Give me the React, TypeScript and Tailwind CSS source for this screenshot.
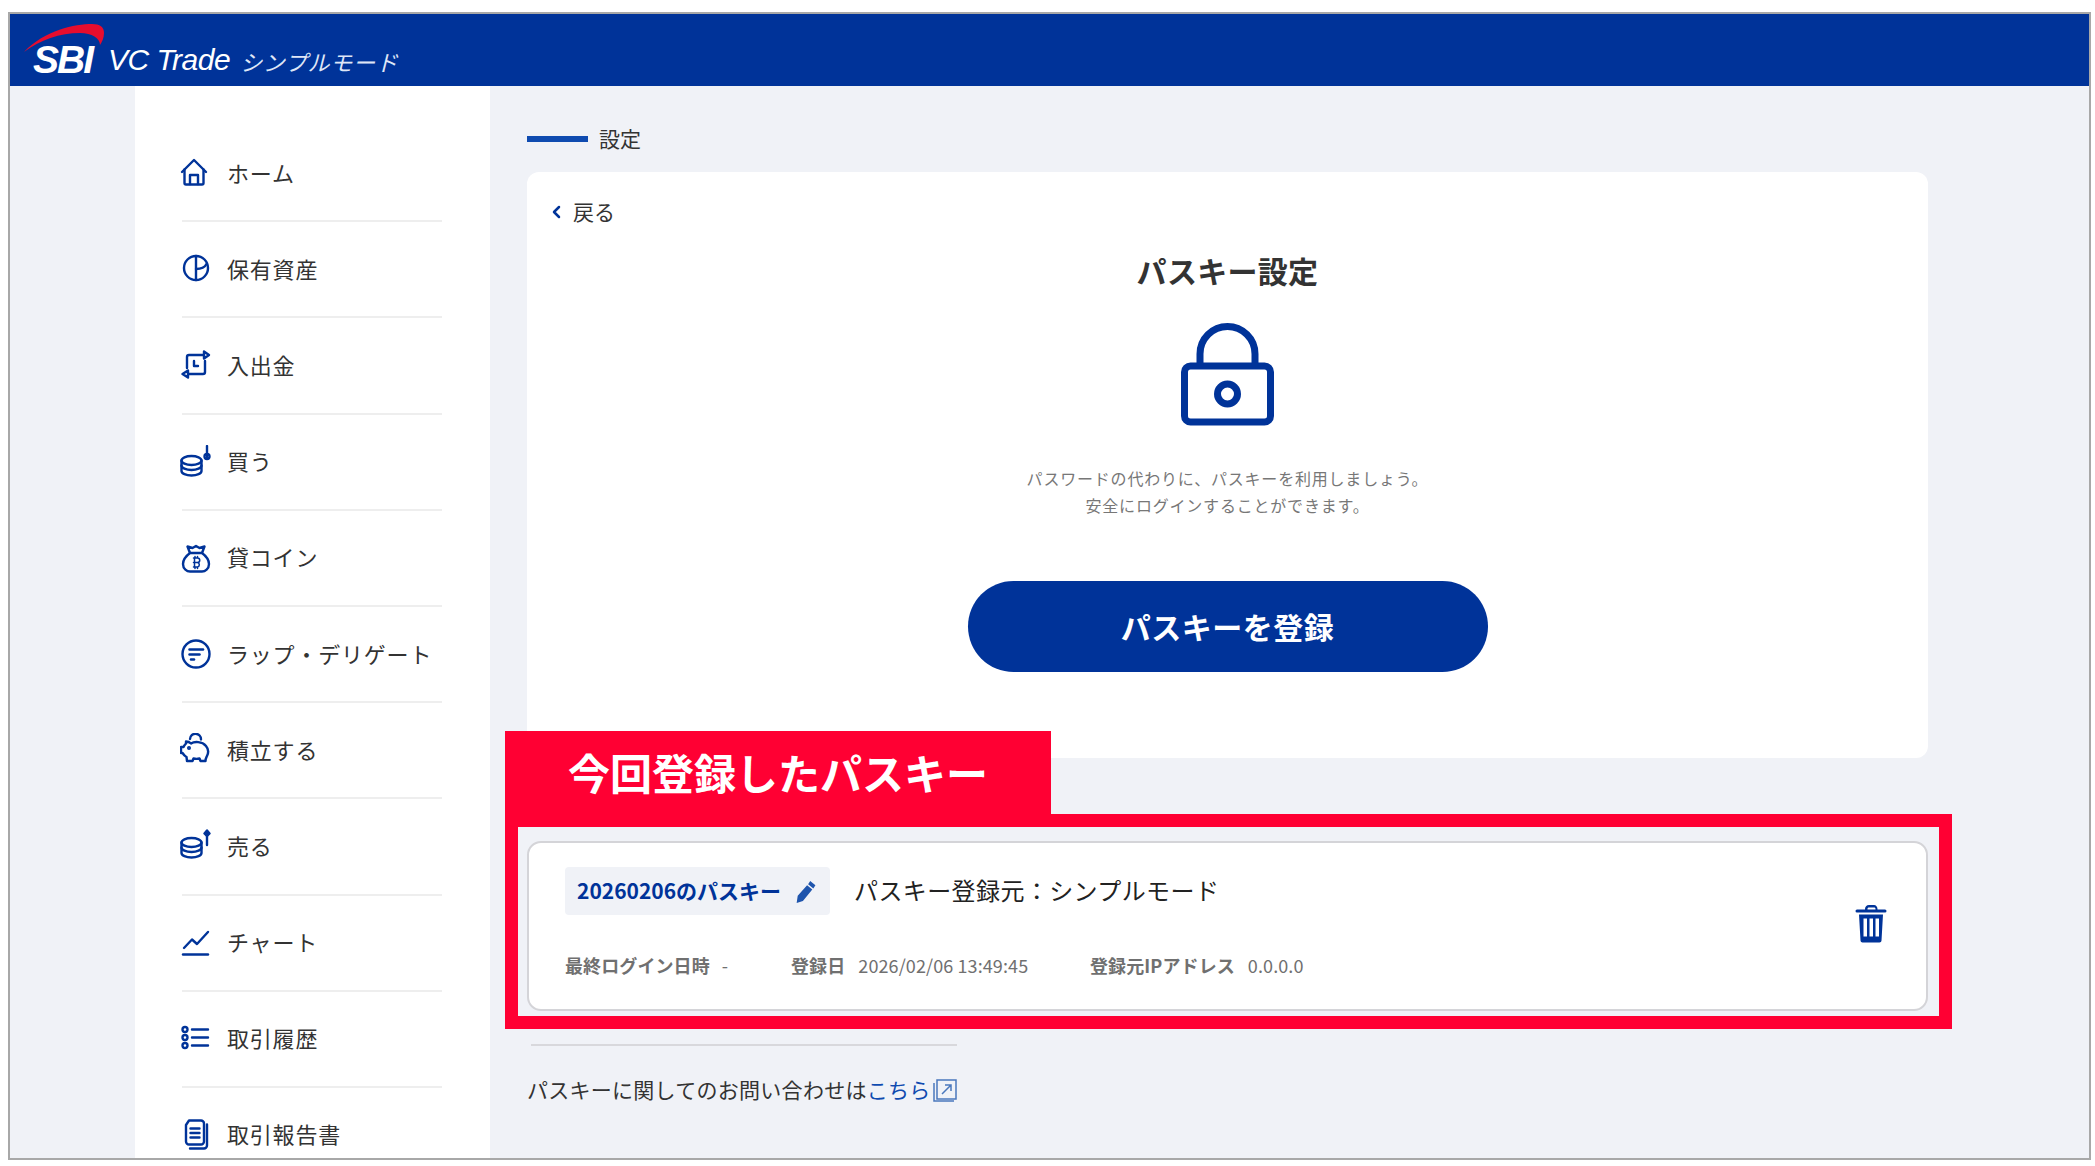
import type { ReactNode } from "react";

const jp = "font-['Noto_Sans_CJK_JP','Noto_Sans',sans-serif]";

function Icon({ children }: { children: ReactNode }) {
    return (
        <svg
            viewBox="0 0 32 32"
            fill="none"
            stroke="#003399"
            strokeWidth="2.4"
            strokeLinecap="round"
            strokeLinejoin="round"
            className="w-8 h-8 shrink-0 -ml-[2px]"
        >
            {children}
        </svg>
    );
}

function Coins({ up }: { up: boolean }) {
    return (
        <Icon>
            <g transform={up ? "translate(0 -2)" : undefined}>
                <ellipse cx="11.500" cy="15.500" rx="10" ry="4.500" />
                <path d="M1.500 15.500v10.500c0 2.500 4.500 4.500 10 4.500s10-2 10-4.500V15.500" />
                <path d="M1.500 20.500c0 2.500 4.500 4.500 10 4.500s10-2 10-4.500" />
            </g>
            {up ? (
                <>
                    <path d="M27 5v11" />
                    <path d="M27 1.500 29.500 4.500 27 7 24.500 4.500z" fill="#003399" />
                </>
            ) : (
                <>
                    <path d="M27 1v11" />
                    <circle cx="27" cy="11.500" r="2.500" />
                </>
            )}
        </Icon>
    );
}

const navItems: { label: string; icon: ReactNode }[] = [
    {
        label: "ホーム",
        icon: (
            <Icon>
                <path d="M2 16 14 4l12 12" />
                <path d="M4.500 13.500V27a1.500 1.500 0 0 0 1.500 1.500h16a1.500 1.500 0 0 0 1.500-1.500V13.500" />
                <path d="M10 28v-9h8v9" />
            </Icon>
        ),
    },
    {
        label: "保有資産",
        icon: (
            <Icon>
                <circle cx="16" cy="16" r="12" />
                <path d="M16 4v24" />
                <path d="M16 17c5 0 9-2 10.500-5" />
            </Icon>
        ),
    },
    {
        label: "入出金",
        icon: (
            <Icon>
                <path d="M7 20V9a2 2 0 0 1 2-2h14" />
                <path d="M24 3.500 29 7l-5 3.500z" />
                <path d="M25 13v11a2 2 0 0 1-2 2H9" />
                <path d="M8 22.500 2.500 26 8 29.500z" />
                <path d="M14 13v5h4" />
            </Icon>
        ),
    },
    { label: "買う", icon: <Coins up={false} /> },
    {
        label: "貸コイン",
        icon: (
            <Icon>
                <path d="M10 12 7.500 5.500 12.500 7l3.500-2 3.500 2 5-1.500L22 12" />
                <path d="M10 12h12c4 3 7 7 7 11 0 5-4 7.500-7 7.500H10c-3 0-7-2.500-7-7.500 0-4 3-8 7-11z" />
                <path
                    d="M13.500 17h4a2 2 0 0 1 0 4.500h-4m4 0a2.300 2.300 0 0 1 0 4.500h-4M14.500 17v9M15 15.500V17m2.500-1.500V17m-2.500 9v1.500m2.500-1.500v1.500"
                    strokeWidth="1.500"
                />
            </Icon>
        ),
    },
    {
        label: "ラップ・デリゲート",
        icon: (
            <Icon>
                <circle cx="16" cy="17" r="13.500" />
                <path d="M9.500 12.500h13.500" strokeWidth="2.500" />
                <path d="M9.500 17.500h10" strokeWidth="2.500" />
                <path d="M11 22.500h3" strokeWidth="2.500" />
            </Icon>
        ),
    },
    {
        label: "積立する",
        icon: (
            <Icon>
                <path d="M10 6a5.500 5.500 0 1 1 11 .500" />
                <path d="M6 8.500c2 0 4 1 5 2 3-2 11-2.500 15 2.500 2.500 3 2.500 7 1 10-1 2-1.500 2.500-1.500 5h-5l-1-2.500c-2 .5-4 .5-6 0l-1 2.500H7l-.5-4C4.500 23 3.500 21.500 2.500 20H1v-6h2.500c.5-1.500 1.500-2.500 2.500-3.500z" />
                <circle cx="9" cy="15" r="0.800" fill="#003399" />
            </Icon>
        ),
    },
    { label: "売る", icon: <Coins up={true} /> },
    {
        label: "チャート",
        icon: (
            <Icon>
                <path d="M4 22 12 13.500 17 18 28 6" />
                <path d="M3 28.500h25" />
            </Icon>
        ),
    },
    {
        label: "取引履歴",
        icon: (
            <Icon>
                <circle cx="5" cy="7.500" r="2.500" />
                <circle cx="5" cy="15.500" r="2.500" />
                <circle cx="5" cy="23.500" r="2.500" />
                <path d="M12 7.500h16M12 15.500h16M12 23.500h16" />
            </Icon>
        ),
    },
    {
        label: "取引報告書",
        icon: (
            <Icon>
                <path d="M9 2.500h12a3 3 0 0 1 3 3v18a3 3 0 0 1-3 3H9a3 3 0 0 1-3-3V7z" />
                <path d="M27 6.500v21a3 3 0 0 1-3 3H10" />
                <path d="M10.500 10.500h9M10.500 15h9M10.500 19.500h9" />
            </Icon>
        ),
    },
];

function Meta({ label, value, className }: { label: string; value: string; className: string }) {
    return (
        <div className={`flex items-center ${className}`}>
            <span className="font-bold text-[#707070] tracking-[0.1px]">{label}</span>
            <span className="text-[#707070] tracking-[0.1px]">{value}</span>
        </div>
    );
}

export default function App() {
    return (
        <div className={`${jp} bg-white h-[1166px] pt-3 pl-2 pr-[4px] pb-[6px] overflow-hidden`}>
            <div className="relative h-full border-2 border-[#a8a8a8] bg-[#f0f2f7] flex flex-col overflow-hidden">
                {/* Header */}
                <header className="h-[72px] bg-[#003399] shrink-0 flex items-end pb-[8px] pl-[12px] text-white relative">
                    <svg viewBox="0 0 84 36" className="absolute left-[13px] top-[9px] w-[84px] h-[36px]">
                        <path d="M1 29C22 7 52 1 69 1c8 0 12 3 12 9 0 5-2 9-4 12 0-7-8-12-20-12C37 10 17 17 1 29z" fill="#e60d2e" />
                    </svg>
                    <span className="font-['Liberation_Sans',sans-serif] font-bold italic text-[39px] leading-[36px] tracking-[-2px] relative w-[66px] ml-[11px]">
                        SBI
                    </span>
                    <span className="font-['Liberation_Sans',sans-serif] italic text-[30px] leading-[36px] tracking-[-0.5px] ml-[9px]">
                        VC Trade
                    </span>
                    <span className="italic text-[22px] leading-[34px] text-[#dfe6f7] tracking-[0.7px] ml-[10px]">
                        シンプルモード
                    </span>
                </header>

                <div className="flex flex-1 min-h-0">
                    {/* Sidebar */}
                    <aside className="w-[355px] ml-[125px] bg-white shrink-0 pt-[40px] pl-[47px] pr-[48px]">
                        {navItems.map((item, idx) => (
                            <div
                                key={idx}
                                className="h-[96.2px] flex items-center gap-[15px] pb-[2px] border-b-2 border-[#eeeeee] text-[22px] text-[#333333]"
                            >
                                {item.icon}
                                <span className="tracking-[0.8px] whitespace-nowrap">{item.label}</span>
                            </div>
                        ))}
                    </aside>

                    {/* Main */}
                    <main className="w-[1401px] ml-[37px] shrink-0">
                        <div className="h-[86px] flex items-center gap-[11px] pt-[19px]">
                            <div className="w-[61px] h-[6px] bg-[#0f4bb0]" />
                            <span className="text-[21px] text-[#333333]">設定</span>
                        </div>

                        <section className="h-[586px] bg-white rounded-xl flex flex-col items-center relative pt-[19px]">
                            <div className="self-start ml-[24px] flex items-center gap-[10px] h-[42px] text-[21px] text-[#333333]">
                                <svg viewBox="0 0 12 14" className="w-3 h-[14px]" fill="none" stroke="#003399" strokeWidth="2.500" strokeLinecap="round" strokeLinejoin="round">
                                    <path d="M8 2 3 7l5 5" />
                                </svg>
                                戻る
                            </div>
                            <h1 className="text-[30px] leading-[44px] font-bold tracking-[0.3px] text-[#333333] mt-[15px]">パスキー設定</h1>
                            <svg viewBox="0 0 93 104" className="w-[93px] h-[104px] mt-[30px]" fill="none" stroke="#003399" strokeWidth="7">
                                <rect x="3.500" y="44" width="86" height="56" rx="6" />
                                <path d="M19 44V32a27.500 27.500 0 0 1 55 0v12" />
                                <circle cx="46.500" cy="72" r="10" />
                            </svg>
                            <p className="text-[16px] leading-[27px] text-[#777777] text-center mt-[39px] tracking-[0.8px]">
                                パスワードの代わりに、パスキーを利用しましょう。
                                <br />
                                安全にログインすることができます。
                            </p>
                            <button className="w-[520px] h-[91px] rounded-full bg-[#003399] text-white text-[30px] tracking-[0.5px] font-bold mt-[62px]">
                                パスキーを登録
                            </button>
                        </section>

                        <section className="mt-[83px] h-[170px] bg-white rounded-[14px] border-2 border-[#d4d4d8] flex items-stretch pl-[36px] pr-[39px]">
                            <div className="flex-1">
                                <div className="flex items-center mt-[24px]">
                                    <div className="w-[265px] h-[48px] rounded bg-[#f0f2f7] flex items-center pl-[12px] text-[#003399] font-bold text-[21px]">
                                        <span>20260206のパスキー</span>
                                        <svg viewBox="0 0 22 24" className="w-[24px] h-[25px] ml-[12px]" fill="#1f55ad">
                                            <path d="M16 2l5 4-2 3-5-4zM13 6l5 4-9 11-6 2 1-7z" />
                                        </svg>
                                    </div>
                                    <span className="text-[24px] tracking-[0.4px] leading-[32px] text-[#222222] ml-[24px] -mt-[3px]">パスキー登録元：シンプルモード</span>
                                </div>
                                <div className="flex items-center text-[18px] mt-[37px]">
                                    <Meta label="最終ログイン日時" value="-" className="gap-[12px] w-[226px]" />
                                    <Meta label="登録日" value="2026/02/06 13:49:45" className="gap-[13px] w-[299px]" />
                                    <Meta label="登録元IPアドレス" value="0.0.0.0" className="gap-[13px]" />
                                </div>
                            </div>
                            <svg viewBox="0 0 32 39" className="w-8 h-[39px] self-center -mt-[5px]" fill="#003399">
                                <path fillRule="evenodd" d="M10 5c0-2 1.500-4 4-4h5c2 0 3.500 2 3.500 4v.500H30a1.300 1.300 0 0 1 0 3H2a1.300 1.300 0 0 1 0-3h8zm2.500.500h8V5c0-1-.5-1.500-1.500-1.500h-5c-1 0-1.500.5-1.500 1.500z" />
                                <path fillRule="evenodd" d="M4 10.500h24l-1.500 26c0 1-1 2-2 2h-17c-1 0-2-1-2-2zm4.500 4v18h3.500v-18zm6 0v18h3.500v-18zm6 0v18h3.500v-18z" />
                            </svg>
                        </section>

                        <div className="w-[426px] h-[2px] bg-[#d8d8dc] ml-[4px] mt-[33px]" />

                        <div className="flex items-center text-[21px] tracking-[0.27px] text-[#333333] mt-[28px]">
                            パスキーに関してのお問い合わせは
                            <span className="text-[#0f4bb0]">こちら</span>
                            <svg viewBox="0 0 24 24" className="w-6 h-6 ml-[2px]" fill="none" stroke="#4a78bd" strokeWidth="1.500">
                                <path d="M4 2h19v19H4z" />
                                <path d="M1 5v18h20" />
                                <path d="M9 16 18 7M12 7h6v6" />
                            </svg>
                        </div>
                    </main>
                </div>

                {/* Annotation */}
                <div className="absolute left-[495px] top-[717px] w-[546px] h-[84px] bg-[#ff0033] flex items-center pl-[63px] pb-[4px] text-white text-[42px] font-bold">
                    今回登録したパスキー
                </div>
                <div className="absolute left-[495px] top-[800px] w-[1447px] h-[215px] border-[13px] border-[#ff0033]" />
            </div>
        </div>
    );
}
